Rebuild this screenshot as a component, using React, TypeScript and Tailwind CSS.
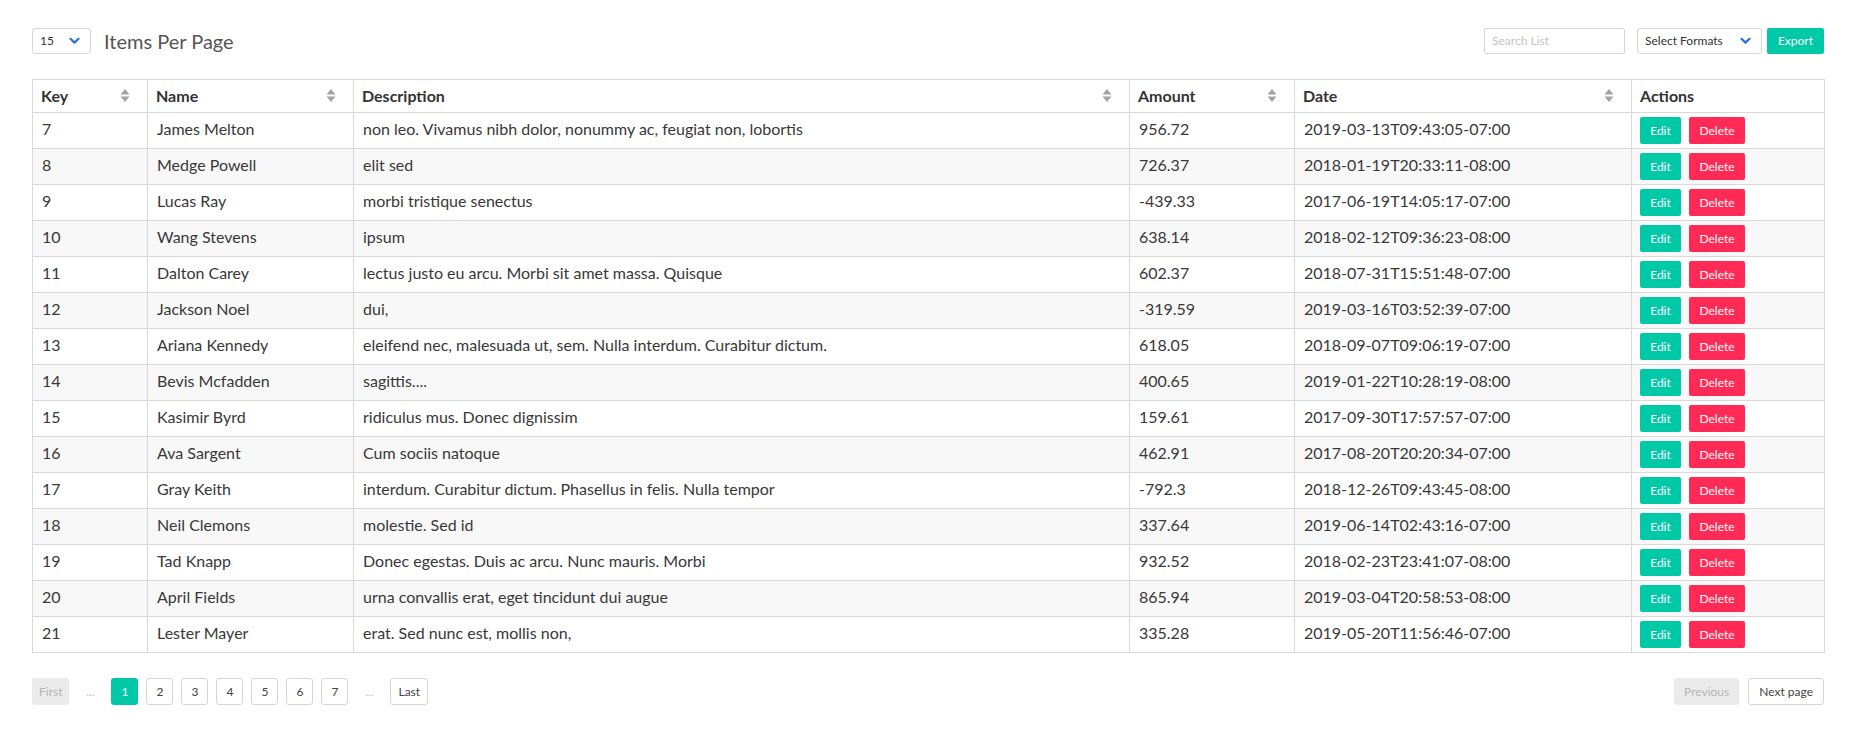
import { ReactNode } from 'react';

interface Row {
  key: number;
  name: string;
  description: string;
  amount: string;
  date: string;
}

const rows: Row[] = [
  { key: 7, name: 'James Melton', description: 'non leo. Vivamus nibh dolor, nonummy ac, feugiat non, lobortis', amount: '956.72', date: '2019-03-13T09:43:05-07:00' },
  { key: 8, name: 'Medge Powell', description: 'elit sed', amount: '726.37', date: '2018-01-19T20:33:11-08:00' },
  { key: 9, name: 'Lucas Ray', description: 'morbi tristique senectus', amount: '-439.33', date: '2017-06-19T14:05:17-07:00' },
  { key: 10, name: 'Wang Stevens', description: 'ipsum', amount: '638.14', date: '2018-02-12T09:36:23-08:00' },
  { key: 11, name: 'Dalton Carey', description: 'lectus justo eu arcu. Morbi sit amet massa. Quisque', amount: '602.37', date: '2018-07-31T15:51:48-07:00' },
  { key: 12, name: 'Jackson Noel', description: 'dui,', amount: '-319.59', date: '2019-03-16T03:52:39-07:00' },
  { key: 13, name: 'Ariana Kennedy', description: 'eleifend nec, malesuada ut, sem. Nulla interdum. Curabitur dictum.', amount: '618.05', date: '2018-09-07T09:06:19-07:00' },
  { key: 14, name: 'Bevis Mcfadden', description: 'sagittis....', amount: '400.65', date: '2019-01-22T10:28:19-08:00' },
  { key: 15, name: 'Kasimir Byrd', description: 'ridiculus mus. Donec dignissim', amount: '159.61', date: '2017-09-30T17:57:57-07:00' },
  { key: 16, name: 'Ava Sargent', description: 'Cum sociis natoque', amount: '462.91', date: '2017-08-20T20:20:34-07:00' },
  { key: 17, name: 'Gray Keith', description: 'interdum. Curabitur dictum. Phasellus in felis. Nulla tempor', amount: '-792.3', date: '2018-12-26T09:43:45-08:00' },
  { key: 18, name: 'Neil Clemons', description: 'molestie. Sed id', amount: '337.64', date: '2019-06-14T02:43:16-07:00' },
  { key: 19, name: 'Tad Knapp', description: 'Donec egestas. Duis ac arcu. Nunc mauris. Morbi', amount: '932.52', date: '2018-02-23T23:41:07-08:00' },
  { key: 20, name: 'April Fields', description: 'urna convallis erat, eget tincidunt dui augue', amount: '865.94', date: '2019-03-04T20:58:53-08:00' },
  { key: 21, name: 'Lester Mayer', description: 'erat. Sed nunc est, mollis non,', amount: '335.28', date: '2019-05-20T11:56:46-07:00' },
];

const Chevron = () => (
  <svg width="11" height="8" viewBox="0 0 11 8" className="shrink-0">
    <polyline points="1.5,1.8 5.5,5.6 9.5,1.8" fill="none" stroke="#2a6fdb" strokeWidth="2.2" strokeLinecap="round" strokeLinejoin="round" />
  </svg>
);

const SortIcon = () => (
  <svg width="10" height="15" viewBox="0 0 10 15" className="shrink-0">
    <polygon points="5,1 9.5,6.5 0.5,6.5" fill="#a3a3a3" />
    <polygon points="0.5,8.5 9.5,8.5 5,14" fill="#a3a3a3" />
  </svg>
);

const Th = ({ children, sortable = true }: { children: ReactNode; sortable?: boolean }) => (
  <th className="border border-[#d9d9d9] pl-[8px] pr-[17px] h-[33px] pb-[1px] text-left font-bold text-[16px] text-[#333]">
    <div className="flex items-center justify-between">
      <span>{children}</span>
      {sortable && <SortIcon />}
    </div>
  </th>
);

const Td = ({ children }: { children: ReactNode }) => (
  <td className="border border-[#d9d9d9] px-[9px] pb-[3px] h-[36px] text-[16px] text-[#383838] whitespace-nowrap">{children}</td>
);

const PageBtn = ({ children, active, disabled, wide }: { children: ReactNode; active?: boolean; disabled?: boolean; wide?: boolean }) => {
  if (active) {
    return <span className="h-[27px] min-w-[27px] px-[8px] rounded-[3px] bg-[#00c9a7] text-white text-[12px] flex items-center justify-center">{children}</span>;
  }
  if (disabled) {
    return <span className={`h-[27px] rounded-[3px] bg-[#ebebeb] text-[#b5b5b5] text-[12px] flex items-center justify-center ${wide ? 'px-[10px]' : 'px-[7px]'}`}>{children}</span>;
  }
  return <span className={`h-[27px] min-w-[27px] rounded-[3px] border border-[#d6d6d6] bg-white text-[#444] text-[12px] flex items-center justify-center ${wide ? 'px-[10px]' : 'px-[7px]'}`}>{children}</span>;
};

export default function App() {
  return (
    <div className="min-h-screen bg-white px-[32px] pt-[28px]" style={{ fontFamily: 'Lato, "Open Sans", sans-serif' }}>
      {/* top bar */}
      <div className="flex items-center justify-between h-[26px]">
        <div className="flex items-center gap-[13px]">
          <div className="w-[59px] h-[26px] border border-[#d6d6d6] rounded-[3px] flex items-center justify-between pl-[7px] pr-[10px] text-[12px] text-[#333]">
            <span>15</span>
            <Chevron />
          </div>
          <span className="text-[20px] text-[#555]">Items Per Page</span>
        </div>
        <div className="flex items-center">
          <div className="w-[141px] h-[26px] border border-[#d6d6d6] rounded-[2px] flex items-center px-[7px] text-[12px] text-[#c4c4c4]">
            Search List
          </div>
          <div className="ml-[12px] w-[125px] h-[26px] border border-[#d6d6d6] rounded-[3px] flex items-center justify-between pl-[7px] pr-[10px] text-[12px] text-[#333]">
            <span>Select Formats</span>
            <Chevron />
          </div>
          <div className="ml-[5px] w-[57px] h-[26px] rounded-[2px] bg-[#00c9a7] text-white text-[12px] flex items-center justify-center">
            Export
          </div>
        </div>
      </div>

      {/* table */}
      <table className="mt-[25px] w-[1792px] table-fixed border-collapse">
        <colgroup>
          <col className="w-[115px]" />
          <col className="w-[206px]" />
          <col className="w-[776px]" />
          <col className="w-[165px]" />
          <col className="w-[337px]" />
          <col className="w-[193px]" />
        </colgroup>
        <thead>
          <tr>
            <Th>Key</Th>
            <Th>Name</Th>
            <Th>Description</Th>
            <Th>Amount</Th>
            <Th>Date</Th>
            <Th sortable={false}>Actions</Th>
          </tr>
        </thead>
        <tbody>
          {rows.map((r, i) => (
            <tr key={r.key} className={i % 2 === 1 ? 'bg-[#f8f8f8]' : 'bg-white'}>
              <Td>{r.key}</Td>
              <Td>{r.name}</Td>
              <Td>{r.description}</Td>
              <Td>{r.amount}</Td>
              <Td>{r.date}</Td>
              <td className="border border-[#d9d9d9] pl-[8px] h-[36px]">
                <div className="flex items-center gap-[8px]">
                  <span className="w-[41px] h-[27px] rounded-[2px] bg-[#00c9a7] text-white text-[12px] flex items-center justify-center">Edit</span>
                  <span className="w-[56px] h-[27px] rounded-[2px] bg-[#ff2b56] text-white text-[12px] flex items-center justify-center">Delete</span>
                </div>
              </td>
            </tr>
          ))}
        </tbody>
      </table>

      {/* pagination */}
      <div className="mt-[25px] flex items-center justify-between">
        <div className="flex items-center">
          <PageBtn disabled>First</PageBtn>
          <span className="w-[42px] text-center text-[12px] text-[#bbb]">...</span>
          <div className="flex items-center gap-[8px]">
            <PageBtn active>1</PageBtn>
            <PageBtn>2</PageBtn>
            <PageBtn>3</PageBtn>
            <PageBtn>4</PageBtn>
            <PageBtn>5</PageBtn>
            <PageBtn>6</PageBtn>
            <PageBtn>7</PageBtn>
          </div>
          <span className="w-[42px] text-center text-[12px] text-[#bbb]">...</span>
          <PageBtn>Last</PageBtn>
        </div>
        <div className="flex items-center gap-[9px]">
          <PageBtn disabled wide>Previous</PageBtn>
          <PageBtn wide>Next page</PageBtn>
        </div>
      </div>
    </div>
  );
}
